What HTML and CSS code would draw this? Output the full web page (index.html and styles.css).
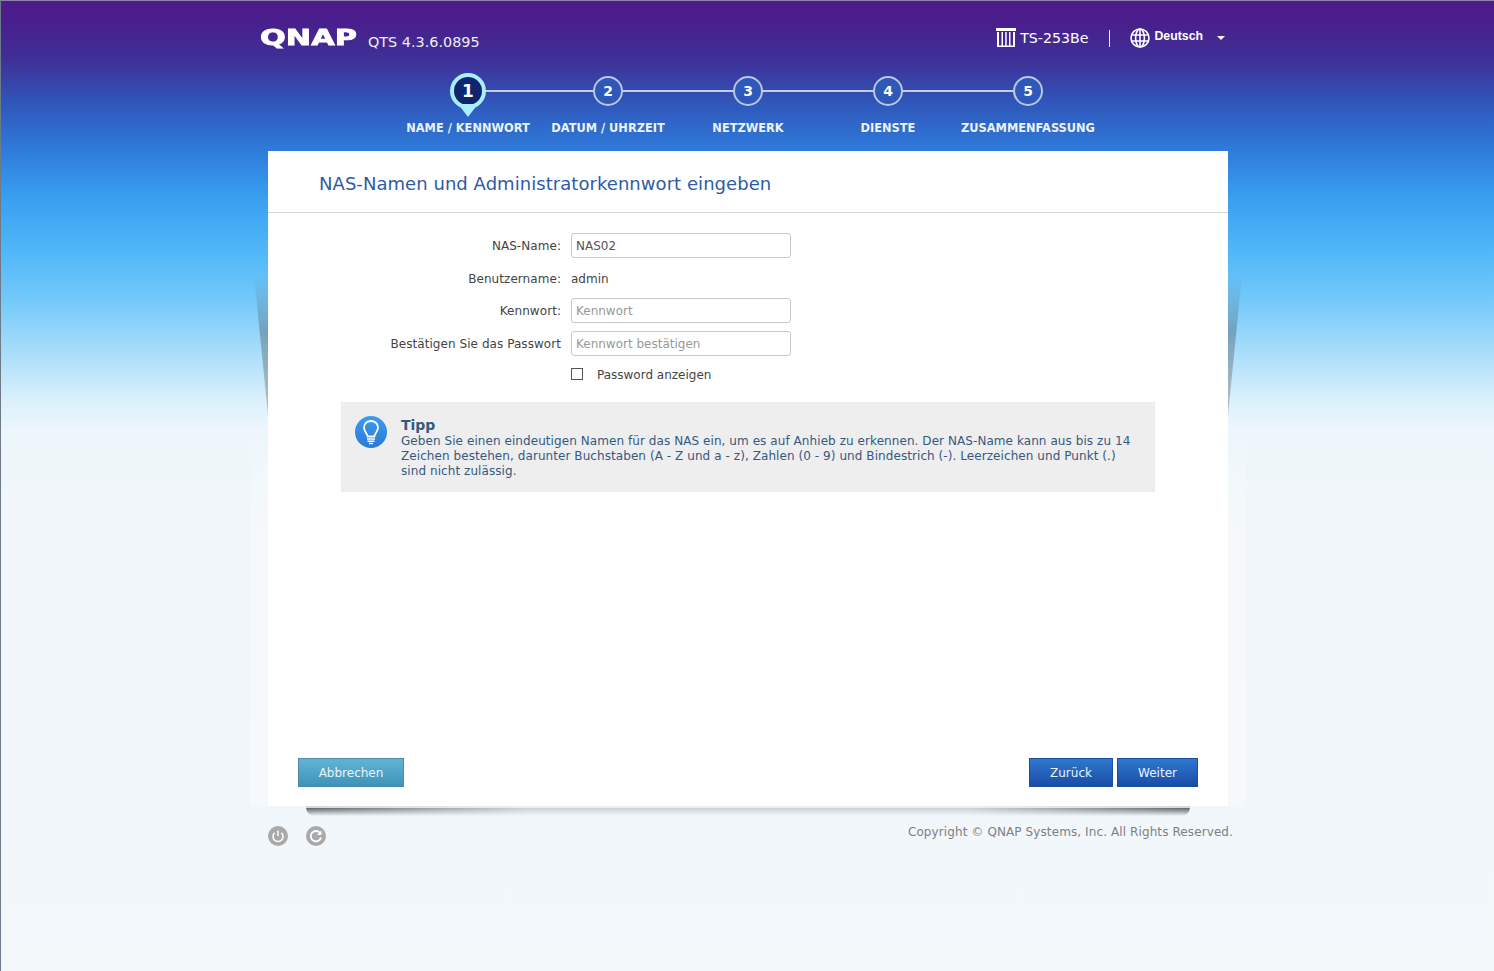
FILE: index.html
```html
<!DOCTYPE html>
<html lang="de">
<head>
    <meta charset="UTF-8">
    <meta name="viewport" content="width=device-width, initial-scale=1.0">
    <title>QNAP Schnellinstallation</title>
    <link rel="stylesheet" href="styles.css">
</head>
<body>
    <div class="wrapper">
        <header class="top-bar">
            <div class="brand">
                <span class="logo">QNAP</span>
                <span class="version">QTS 4.3.6.0895</span>
            </div>
            <div class="top-right">
                <svg class="nas-icon" width="20" height="19" viewBox="0 0 20 19">
                    <rect x="0" y="0" width="20" height="3" fill="#fff"/>
                    <rect x="1" y="4" width="2" height="15" fill="#fff"/>
                    <rect x="5.500" y="4" width="1.500" height="15" fill="#fff"/>
                    <rect x="9.200" y="4" width="1.500" height="15" fill="#fff"/>
                    <rect x="13" y="4" width="1.500" height="15" fill="#fff"/>
                    <rect x="17" y="4" width="2" height="15" fill="#fff"/>
                    <rect x="1" y="17.500" width="18" height="1.500" fill="#fff"/>
                </svg>
                <span class="model">TS-253Be</span>
                <span class="divider"></span>
                <svg class="globe" width="20" height="20" viewBox="0 0 20 20" fill="none" stroke="#fff" stroke-width="1.600">
                    <circle cx="10" cy="10" r="9"/>
                    <ellipse cx="10" cy="10" rx="4.400" ry="9"/>
                    <path d="M10 1v18M1.500 7h17M1.500 13h17"/>
                </svg>
                <span class="lang">Deutsch</span>
                <span class="caret"></span>
            </div>
        </header>

        <div class="steps">
            <div class="step current">
                <div class="circle">1</div>
                <div class="step-label">NAME / KENNWORT</div>
            </div>
            <div class="step">
                <div class="circle">2</div>
                <div class="step-label">DATUM / UHRZEIT</div>
            </div>
            <div class="step">
                <div class="circle">3</div>
                <div class="step-label">NETZWERK</div>
            </div>
            <div class="step">
                <div class="circle">4</div>
                <div class="step-label">DIENSTE</div>
            </div>
            <div class="step last">
                <div class="circle">5</div>
                <div class="step-label">ZUSAMMENFASSUNG</div>
            </div>
        </div>

        <div class="panel-wrap">
            <div class="side-shade left"></div>
            <div class="side-shade right"></div>
            <main class="panel">
                <h2 class="panel-title">NAS-Namen und Administratorkennwort eingeben</h2>
                <div class="form">
                    <div class="form-row">
                        <label class="form-label">NAS-Name:</label>
                        <input class="form-input" type="text" value="NAS02">
                    </div>
                    <div class="form-row plain">
                        <label class="form-label">Benutzername:</label>
                        <span class="form-value">admin</span>
                    </div>
                    <div class="form-row">
                        <label class="form-label">Kennwort:</label>
                        <input class="form-input" type="text" placeholder="Kennwort">
                    </div>
                    <div class="form-row">
                        <label class="form-label">Bestätigen Sie das Passwort</label>
                        <input class="form-input" type="text" placeholder="Kennwort bestätigen">
                    </div>
                    <div class="form-row check-row">
                        <span class="form-label"></span>
                        <span class="checkbox"></span>
                        <span class="check-text">Password anzeigen</span>
                    </div>
                </div>

                <div class="tip">
                    <svg class="tip-icon" width="32" height="32" viewBox="0 0 32 32">
                        <defs>
                            <linearGradient id="tipBg" x1="0" y1="0" x2="0" y2="1">
                                <stop offset="0" stop-color="#3d9bee"/>
                                <stop offset="1" stop-color="#2a79d6"/>
                            </linearGradient>
                        </defs>
                        <circle cx="16" cy="16" r="16" fill="url(#tipBg)"/>
                        <path d="M12.600 20.500c0-3-3.600-4.600-3.600-9 0-3.900 3.100-6.500 7-6.500s7 2.600 7 6.500c0 4.400-3.600 6-3.600 9z" fill="none" stroke="#fff" stroke-width="1.800"/>
                        <path d="M12 23h8M12.500 25.300h7M14 27.500h4" stroke="#fff" stroke-width="1.400" fill="none"/>
                    </svg>
                    <div class="tip-body">
                        <div class="tip-title">Tipp</div>
                        <p class="tip-text">Geben Sie einen eindeutigen Namen für das NAS ein, um es auf Anhieb zu erkennen. Der NAS-Name kann aus bis zu 14 Zeichen bestehen, darunter Buchstaben (A - Z und a - z), Zahlen (0 - 9) und Bindestrich (-). Leerzeichen und Punkt (.) sind nicht zulässig.</p>
                    </div>
                </div>

                <div class="actions">
                    <button class="btn btn-cancel">Abbrechen</button>
                    <div class="actions-right">
                        <button class="btn btn-primary back">Zurück</button>
                        <button class="btn btn-primary next">Weiter</button>
                    </div>
                </div>
            </main>
            <div class="panel-shadow"></div>
        </div>

        <footer class="bottom">
            <div class="bottom-icons">
                <svg width="20" height="20" viewBox="0 0 20 20">
                    <circle cx="10" cy="10" r="10" fill="#a9a9a9"/>
                    <path d="M6.700 6.800a5 5 0 1 0 6.600 0M10 4.500v5.500" fill="none" stroke="#fff" stroke-width="1.500"/>
                </svg>
                <svg width="20" height="20" viewBox="0 0 20 20">
                    <circle cx="10" cy="10" r="10" fill="#a9a9a9"/>
                    <path d="M15 11.500a5.200 5.200 0 1 1-1.100-4.700" fill="none" stroke="#fff" stroke-width="1.800"/>
                    <path d="M15.500 4.500v4.500h-4.500z" fill="#fff"/>
                </svg>
            </div>
            <div class="copyright">Copyright © QNAP Systems, Inc. All Rights Reserved.</div>
        </footer>
    </div>
</body>
</html>
```

FILE: styles.css
```css
* {
    box-sizing: border-box;
}
html, body {
    height: 100%;
}
body {
    margin: 0;
    min-height: 971px;
    overflow: hidden;
    font-family: "DejaVu Sans", Verdana, sans-serif;
    font-size: 12px;
    color: #444;
    border-left: 1px solid #6d7b88;
    border-top: 1px solid #8f80a8;
    background: linear-gradient(to bottom,
        #4b1d8b 0,
        #4a1e8c 20px,
        #3f3097 60px,
        #2f58bb 105px,
        #2f7bdb 150px,
        #3aa0f0 200px,
        #4fb7f8 250px,
        #74c9fb 300px,
        #a6dcfa 350px,
        #dbf0fb 400px,
        #ecf6fb 430px,
        #f1f6fa 500px,
        #f2f7fa 971px);
}
.wrapper {
    width: 976px;
    margin-left: 259px;
}
.top-bar {
    height: 72px;
    display: flex;
    justify-content: space-between;
    align-items: flex-start;
    color: #fff;
}
.brand {
    display: flex;
    align-items: flex-start;
    padding-top: 23px;
}
.logo {
    display: block;
    width: 107px;
    font-weight: 700;
    font-size: 22px;
    line-height: 28px;
    transform: scaleX(1.380);
    transform-origin: left center;
    -webkit-text-stroke: 0.8px #fff;
}
.version {
    font-size: 14.400px;
    padding-top: 10px;
    margin-left: 1px;
    color: #eee;
}
.top-right {
    display: flex;
    align-items: center;
    padding-top: 27px;
    padding-right: 11px;
}
.nas-icon {
    margin-top: -1px;
}
.model {
    font-size: 14.200px;
    margin-left: 4px;
    margin-top: -1px;
}
.divider {
    width: 1px;
    height: 17px;
    background: #eee;
    margin: 0 20px 0 21px;
}
.lang {
    font-family: "Liberation Sans", sans-serif;
    font-weight: 700;
    font-size: 12.300px;
    margin-left: 4px;
    margin-top: -5px;
}
.caret {
    width: 0;
    height: 0;
    border-left: 4px solid transparent;
    border-right: 4px solid transparent;
    border-top: 4px solid #fff;
    margin-left: 14px;
}
.steps {
    display: flex;
    margin-left: 138px;
    height: 78px;
}
.step {
    width: 140px;
    position: relative;
    display: flex;
    flex-direction: column;
    align-items: center;
    padding-top: 3px;
}
.step::after {
    content: "";
    position: absolute;
    top: 17px;
    left: 70px;
    width: 140px;
    height: 2px;
    background: #c4cee6;
}
.step.last::after {
    display: none;
}
.circle {
    position: relative;
    z-index: 1;
    width: 30px;
    height: 30px;
    border-radius: 50%;
    border: 2px solid #b9c6e2;
    background: #2f58bb;
    color: #fff;
    font-weight: 700;
    font-size: 14px;
    line-height: 26px;
    text-align: center;
}
.step.current {
    padding-top: 0;
}
.step.current .circle {
    width: 36px;
    height: 36px;
    border: 4px solid #a8eefb;
    background: #10256f;
    line-height: 28px;
    font-size: 17px;
}
.step.current .circle::after {
    content: "";
    position: absolute;
    left: 4px;
    top: 27px;
    border-left: 10px solid transparent;
    border-right: 10px solid transparent;
    border-top: 13px solid #a8eefb;
    z-index: -1;
}
.step-label {
    position: absolute;
    top: 48px;
    left: 0;
    width: 100%;
    text-align: center;
    white-space: nowrap;
    font-weight: 700;
    font-size: 11.400px;
    line-height: 14px;
    color: #eaf3fb;
}
.panel-wrap {
    position: relative;
    margin-left: 8px;
    width: 960px;
}
.panel-wrap::before {
    content: "";
    position: absolute;
    left: -18px;
    right: -18px;
    top: 270px;
    bottom: 0;
    background: linear-gradient(to bottom, rgba(245, 249, 251, 0), #f5f9fb 35%);
}
.side-shade {
    position: absolute;
    top: 124px;
    width: 14px;
    height: 140px;
    background: linear-gradient(to bottom, rgba(60, 110, 150, 0), rgba(90, 120, 140, 0.55) 40%, rgba(150, 150, 150, 0.55));
}
.side-shade.left {
    left: -14px;
    clip-path: polygon(0 0, 100% 0, 100% 100%);
}
.side-shade.right {
    right: -14px;
    clip-path: polygon(0 0, 100% 0, 0 100%);
}
.panel {
    position: relative;
    height: 655px;
    background: #fff;
    display: flex;
    flex-direction: column;
}
.panel-title {
    margin: 0;
    height: 62px;
    padding: 22px 0 0 51px;
    font-weight: 400;
    font-size: 18px;
    letter-spacing: 0.05px;
    line-height: 22px;
    color: #2d5ba8;
    border-bottom: 1px solid #d8d8d8;
}
.form {
    padding-top: 20px;
}
.form-row {
    display: flex;
    align-items: center;
    height: 25px;
    margin-bottom: 8px;
}
.form-row.plain {
    margin-bottom: 7px;
}
.form-label {
    width: 293px;
    text-align: right;
    white-space: nowrap;
    margin-right: 10px;
    letter-spacing: 0.06px;
}
.form-input {
    width: 220px;
    height: 25px;
    border: 1px solid #c8c8c8;
    border-radius: 3px;
    padding: 0 4px;
    font-family: inherit;
    font-size: 12px;
    color: #555;
}
.form-input::placeholder {
    color: #999;
}
.check-row {
    height: 22px;
}
.checkbox {
    width: 12px;
    height: 12px;
    border: 1px solid #555;
    margin-right: 14px;
    margin-top: -2px;
}
.tip {
    margin: 8px 73px 0;
    height: 90px;
    background: #eeeeee;
    display: flex;
    padding: 14px 19px 0 14px;
}
.tip-icon {
    flex: none;
    margin-right: 14px;
}
.tip-body {
    padding-top: 1px;
}
.tip-title {
    font-size: 14px;
    font-weight: 700;
    line-height: 17px;
    color: #35597f;
}
.tip-text {
    margin: 0;
    line-height: 15px;
    letter-spacing: 0.07px;
    color: #35597f;
}
.actions {
    margin-top: auto;
    padding: 0 30px 19px;
    display: flex;
    justify-content: space-between;
}
.actions-right {
    display: flex;
    gap: 4px;
}
.btn {
    height: 29px;
    border-radius: 0;
    font-family: inherit;
    font-size: 12px;
    color: #e8f4fc;
    cursor: pointer;
}
.btn-cancel {
    width: 106px;
    border: 1px solid #4d8ca6;
    background: linear-gradient(to bottom, #62b4d6, #3f93b8);
}
.btn-primary {
    border: 1px solid #1b4fa0;
    background: linear-gradient(to bottom, #2f78cf, #1a4ca6);
}
.back {
    width: 84px;
}
.next {
    width: 81px;
}
.panel-shadow {
    position: absolute;
    left: 38px;
    right: 38px;
    top: 655px;
    height: 10px;
    background: linear-gradient(to bottom, #d8d8d8 0, #d8d8d8 2px, rgba(60, 60, 60, 0.8) 2px, rgba(70, 70, 70, 0));
    border-radius: 0 0 8px 8px;
    mask-image: linear-gradient(to right, #000, rgba(0, 0, 0, 0.25) 25%, rgba(0, 0, 0, 0.25) 75%, #000);
}
.bottom {
    display: flex;
    justify-content: space-between;
    margin-left: 8px;
    padding-top: 20px;
    width: 965px;
}
.bottom-icons {
    display: flex;
    gap: 18px;
}
.copyright {
    margin-top: -1px;
    letter-spacing: 0.1px;
    color: #808080;
}
```
